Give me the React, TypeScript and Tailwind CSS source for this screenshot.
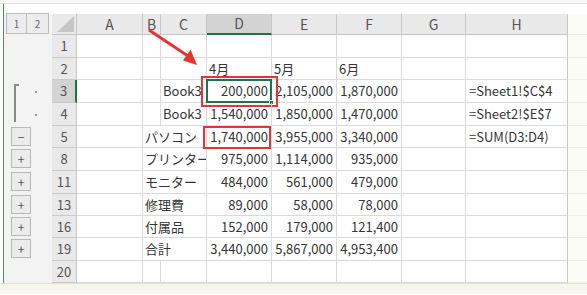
type Outline = 'none' | 'dot' | 'minus' | 'plus';

type Row = {
  n: string;
  h: string;
  label?: string;
  c?: string;
  d?: string;
  e?: string;
  f?: string;
  formula?: string;
  month?: boolean;
  outline: Outline;
  active?: boolean;
};

const rows: Row[] = [
  { n: '1', h: 'h-[23px]', outline: 'none' },
  { n: '2', h: 'h-[22px]', d: '4月', e: '5月', f: '6月', month: true, outline: 'none' },
  { n: '3', h: 'h-[23px]', c: 'Book3', d: '200,000', e: '2,105,000', f: '1,870,000', formula: '=Sheet1!$C$4', outline: 'dot', active: true },
  { n: '4', h: 'h-[23px]', c: 'Book3', d: '1,540,000', e: '1,850,000', f: '1,470,000', formula: '=Sheet2!$E$7', outline: 'dot' },
  { n: '5', h: 'h-[22px]', label: 'パソコン', d: '1,740,000', e: '3,955,000', f: '3,340,000', formula: '=SUM(D3:D4)', outline: 'minus' },
  { n: '8', h: 'h-[23px]', label: 'プリンター', d: '975,000', e: '1,114,000', f: '935,000', outline: 'plus' },
  { n: '11', h: 'h-[23px]', label: 'モニター', d: '484,000', e: '561,000', f: '479,000', outline: 'plus' },
  { n: '13', h: 'h-[22px]', label: '修理費', d: '89,000', e: '58,000', f: '78,000', outline: 'plus' },
  { n: '16', h: 'h-[22px]', label: '付属品', d: '152,000', e: '179,000', f: '121,400', outline: 'plus' },
  { n: '19', h: 'h-[23px]', label: '合計', d: '3,440,000', e: '5,867,000', f: '4,953,400', outline: 'plus' },
  { n: '20', h: 'h-[22px]', outline: 'none' },
];

const cols = [
  { k: 'A', w: 'w-[66px]' },
  { k: 'B', w: 'w-[18px]' },
  { k: 'C', w: 'w-[46px]' },
  { k: 'D', w: 'w-[65px]' },
  { k: 'E', w: 'w-[65px]' },
  { k: 'F', w: 'w-[65px]' },
  { k: 'G', w: 'w-[64px]' },
  { k: 'H', w: 'w-[102px]' },
];

const cell = 'h-full shrink-0 border-r border-b border-[#dadada] flex items-center whitespace-nowrap overflow-hidden';

function OutlineMark({ kind }: { kind: Outline }) {
  if (kind === 'dot') {
    return (
      <div className="flex h-full items-center pl-[31px]">
        <div className="h-[2px] w-[2px] bg-[#9a9a9a]" />
      </div>
    );
  }
  if (kind === 'minus' || kind === 'plus') {
    return (
      <div className="flex h-full items-start pl-[7px] pt-[1px]">
        <div className="flex h-[19px] w-[20px] items-center justify-center border border-[#b8b8b8] bg-[#ececec] text-[12px] leading-none text-[#555]">
          {kind === 'minus' ? '−' : '+'}
        </div>
      </div>
    );
  }
  return null;
}

function DataRow({ row }: { row: Row }) {
  const num = 'justify-end pr-[3px]';
  const left = 'pl-[2px]';
  return (
    <div className={`flex ${row.h}`}>
      <div className="relative w-[48px] shrink-0 bg-[#f3f3f3]">
        <OutlineMark kind={row.outline} />
      </div>
      <div
        className={`flex h-full w-[25px] shrink-0 items-center justify-center border-b border-[#c9c9c9] text-[13px] text-[#555] ${
          row.active
            ? 'border-r-2 border-r-[#217346] bg-[#d3d3d3]'
            : 'border-r border-r-[#c6c6c6] bg-[#e9e9e9]'
        }`}
      >
        {row.n}
      </div>
      <div className={`${cell} w-[66px]`} />
      {row.label ? (
        <div className={`${cell} w-[64px] ${left}`}>{row.label}</div>
      ) : (
        <>
          <div className={`${cell} w-[18px]`} />
          <div className={`${cell} w-[46px] ${left}`}>{row.c}</div>
        </>
      )}
      <div className={`${cell} relative w-[65px] overflow-visible ${row.month ? left : num}`}>
        {row.d}
        {row.n === '3' && (
          <>
            <div className="pointer-events-none absolute -top-[1px] -left-[1px] -right-[1px] -bottom-[1px] border-2 border-[#217346]" />
            <div className="absolute -right-[3px] -bottom-[3px] h-[5px] w-[5px] border border-white bg-[#217346]" />
            <div className="pointer-events-none absolute -top-[4px] -left-[6px] -right-[7px] -bottom-[5px] border-2 border-[#e0353a]" />
          </>
        )}
        {row.n === '5' && (
          <div className="pointer-events-none absolute top-0 -left-[4px] right-0 -bottom-[2px] border-2 border-[#e0353a]" />
        )}
      </div>
      <div className={`${cell} w-[65px] ${row.month ? left : num}`}>{row.e}</div>
      <div className={`${cell} w-[65px] ${row.month ? left : num}`}>{row.f}</div>
      <div className={`${cell} w-[64px]`} />
      <div className={`${cell} w-[102px] pl-[3px] border-r-[#c8c8c8]`}>{row.formula}</div>
      <div className="h-full flex-1 border-b border-[#eeeedc] bg-[#fcfcf7]" />
    </div>
  );
}

export default function App() {
  return (
    <div className="relative h-[295px] w-[587px] overflow-hidden bg-white font-['Noto_Sans_CJK_JP','Liberation_Sans',sans-serif] text-[13px] text-[#363636]">
      <div className="h-[4px] border-b border-[#dedede] bg-[#fafafa]" />
      <div className="flex">
        <div className="w-[3px] shrink-0 bg-white" />
        <div className="flex-1 border-l border-[#4f8f5a]">
          <div className="h-[10px] bg-white" />
          {/* header row */}
          <div className="flex h-[21px]">
            <div className="flex w-[48px] shrink-0 items-start bg-[#f3f3f3] pl-[2px]">
              <div className="-mt-[1px] flex h-[21px] w-[21px] items-center justify-center border border-[#bdbdbd] bg-[#ececec] text-[10px] text-[#666]">1</div>
              <div className="-mt-[1px] flex h-[21px] w-[22px] items-center justify-center border border-l-0 border-[#bdbdbd] bg-[#ececec] text-[10px] text-[#666]">2</div>
            </div>
            <div className="relative w-[25px] shrink-0 border-r border-b border-[#c6c6c6] bg-[#e9e9e9]">
              <svg className="absolute bottom-[2px] right-[2px]" width="17" height="16" viewBox="0 0 17 16">
                <polygon points="17,0 17,16 0,16" fill="#c6c6c6" />
              </svg>
            </div>
            {cols.map((c) => (
              <div
                key={c.k}
                className={`${c.w} flex shrink-0 items-center justify-center text-[14px] text-[#555] ${
                  c.k === 'D'
                    ? 'border-r border-r-[#c6c6c6] border-b-2 border-b-[#217346] bg-[#d3d3d3]'
                    : 'border-r border-b border-[#c6c6c6] bg-[#e9e9e9]'
                }`}
              >
                {c.k}
              </div>
            ))}
            <div className="flex-1 border-b border-[#eeeedc] bg-[#fcfcf7]" />
          </div>
          <div className="relative">
            {rows.map((r) => (
              <DataRow key={r.n} row={r} />
            ))}
            {/* group bracket for rows 3-4 */}
            <div className="pointer-events-none absolute left-[10px] top-[49px] h-[38px] w-[5px] border-l-2 border-t-2 border-[#8a8a8a]" />
          </div>
        </div>
      </div>
      <div className="h-[11px] border-t border-[#e4e2cf] bg-[#f7f6ee]" />
      <svg className="pointer-events-none absolute left-0 top-0" width="587" height="295">
        <line x1="149" y1="30" x2="188" y2="56" stroke="#e8332e" strokeWidth="3" />
        <polygon points="197,65 183,60.5 190.5,49.5" fill="#e8332e" />
      </svg>
    </div>
  );
}
